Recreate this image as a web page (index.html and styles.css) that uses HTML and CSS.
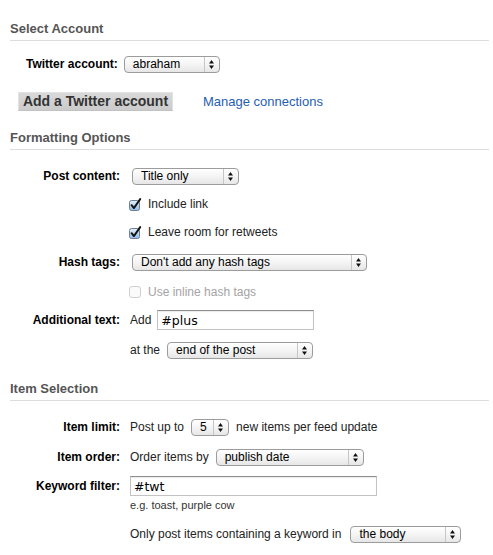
FILE: index.html
```html
<!DOCTYPE html>
<html lang="en">
<head>
<meta charset="utf-8">
<title>Twitter feed settings</title>
<link rel="stylesheet" href="styles.css">
</head>
<body>
<form class="settings">
  <section class="group">
    <h3 class="group-title">Select Account</h3>
    <div class="account-row">
      <label class="account-label" for="account">Twitter account:</label>
      <select id="account" class="sel w-account"><option>abraham</option></select>
    </div>
    <div class="account-actions">
      <button type="button" class="btn">Add a Twitter account</button>
      <a href="#" class="link">Manage connections</a>
    </div>
  </section>

  <section class="group">
    <h3 class="group-title">Formatting Options</h3>
    <div class="field">
      <label class="field-label" for="post-content">Post content:</label>
      <div class="field-value"><select id="post-content" class="sel w-post"><option>Title only</option></select></div>
    </div>
    <div class="field">
      <span class="field-label"></span>
      <label class="field-value check"><input type="checkbox" class="cb" checked>Include link</label>
    </div>
    <div class="field">
      <span class="field-label"></span>
      <label class="field-value check"><input type="checkbox" class="cb" checked>Leave room for retweets</label>
    </div>
    <div class="field field-sp">
      <label class="field-label" for="hash-tags">Hash tags:</label>
      <div class="field-value"><select id="hash-tags" class="sel w-hash"><option>Don't add any hash tags</option></select></div>
    </div>
    <div class="field field-sp">
      <span class="field-label"></span>
      <label class="field-value check is-disabled"><input type="checkbox" class="cb" disabled>Use inline hash tags</label>
    </div>
    <div class="field">
      <label class="field-label" for="extra-text">Additional text:</label>
      <div class="field-value">Add <input id="extra-text" type="text" class="txt w-plus" value="#plus"></div>
    </div>
    <div class="field field-sp">
      <span class="field-label"></span>
      <div class="field-value">at the <select class="sel w-where"><option>end of the post</option></select></div>
    </div>
  </section>

  <section class="group group-last">
    <h3 class="group-title">Item Selection</h3>
    <div class="field">
      <label class="field-label" for="item-limit">Item limit:</label>
      <div class="field-value">Post up to <select id="item-limit" class="sel w-limit"><option>5</option></select> new items per feed update</div>
    </div>
    <div class="field field-sp">
      <label class="field-label" for="item-order">Item order:</label>
      <div class="field-value">Order items by <select id="item-order" class="sel w-order"><option>publish date</option></select></div>
    </div>
    <div class="field field-stack">
      <label class="field-label" for="keywords">Keyword filter:</label>
      <div class="field-value stack">
        <input id="keywords" type="text" class="txt w-keywords" value="#twt">
        <span class="hint">e.g. toast, purple cow</span>
      </div>
    </div>
    <div class="field field-last">
      <span class="field-label"></span>
      <div class="field-value">Only post items containing a keyword in <select class="sel w-in"><option>the body</option></select></div>
    </div>
  </section>
</form>
</body>
</html>
```

FILE: styles.css
```css
* { box-sizing: border-box; }

html, body {
  margin: 0;
  background: #fff;
}

body {
  font: 12px/15px "Liberation Sans", Arial, sans-serif;
  color: #222;
}

.settings {
  padding: 21px 4px 0 10px;
}

/* section headings with a rule underneath */
.group + .group { margin-top: 19px; }
.group-last { margin-top: 21px !important; }

.group-title {
  margin: 0;
  font-size: 13px;
  line-height: 16px;
  font-weight: bold;
  color: #555;
  padding-bottom: 3px;
  border-bottom: 1px solid #ddd;
}

/* account block */
.account-row {
  display: flex;
  align-items: center;
  height: 20px;
  margin-top: 13px;
  padding-left: 16px;
}

.account-label {
  font-weight: bold;
  color: #000;
  margin-right: 4px;
}

.account-actions {
  display: flex;
  align-items: center;
  margin-top: 18px;
  padding-left: 8px;
}

.btn {
  height: 19px;
  width: 155px;
  padding: 0;
  font: bold 14px/17px "Liberation Sans", Arial, sans-serif;
  color: #333;
  background: linear-gradient(#d9d9d9, #cbcbcb);
  border: 1px solid #e2e2e2;
  border-bottom-color: #c2c2c2;
  border-radius: 0;
}

.link {
  margin-left: 30px;
  font-size: 13px;
  color: #1f5eb3;
  text-decoration: none;
}

/* label / control rows */
.field {
  display: flex;
  align-items: center;
  min-height: 20px;
  margin-top: 8px;
}

.group-title + .field { margin-top: 16px; }
.field-sp { margin-top: 10px; }
.field-stack { align-items: flex-start; margin-top: 9px; }
.field-last { margin-top: 12px; }

.field-label {
  flex: none;
  width: 110px;
  text-align: right;
  font-weight: bold;
  color: #000;
}

.field-stack .field-label { line-height: 20px; }

.field-value {
  display: flex;
  align-items: center;
  gap: 5px;
  margin-left: 10px;
  white-space: nowrap;
}

.field-last .field-value { gap: 7px; }

.stack {
  flex-direction: column;
  align-items: flex-start;
  gap: 0;
}

.hint {
  margin-top: 2px;
  font-size: 11px;
  line-height: 14px;
  color: #333;
}

/* aqua-style popup menus */
.sel {
  -webkit-appearance: none;
  appearance: none;
  height: 17px;
  margin: 0 2px;
  padding: 0 16px 0 8px;
  font: 12px "Liberation Sans", Arial, sans-serif;
  color: #000;
  border: 1px solid #9c9c9c;
  border-radius: 4px;
  background:
    url("data:image/svg+xml,%3Csvg xmlns='http://www.w3.org/2000/svg' width='15' height='15'%3E%3Cpath d='M0.5 0v15' stroke='%23c6c6c6'/%3E%3Cpath d='M5 6.5h5l-2.5-3.5z M5 8.5h5l-2.5 3.5z' fill='%23111'/%3E%3C/svg%3E") right center / 15px 15px no-repeat,
    linear-gradient(#ffffff, #f3f3f3 55%, #e6e6e6);
}

.w-account { width: 96px; margin-left: 2px; }
.w-post { width: 107px; }
.w-hash { width: 235px; }
.w-where { width: 146px; }
.w-limit { width: 38px; }
.w-order { width: 148px; }
.w-in { width: 111px; }

/* text fields */
.txt {
  height: 20px;
  margin: 0 0 0 1px;
  padding: 0 3px;
  font: 12.5px "DejaVu Sans", Verdana, sans-serif;
  color: #000;
  background: #fff;
  border: 1px solid #c3c3c3;
  border-top-color: #8d8d8d;
  border-radius: 0;
  box-shadow: inset 0 1px 1px rgba(0, 0, 0, 0.08);
}

.w-plus { width: 157px; }
.w-keywords { width: 247px; margin-left: 0; }

/* checkboxes */
.check { gap: 6px; }

.cb {
  -webkit-appearance: none;
  appearance: none;
  flex: none;
  width: 13px;
  height: 13px;
  margin: 0 0 0 -1px;
  background: url("data:image/svg+xml,%3Csvg xmlns='http://www.w3.org/2000/svg' width='13' height='13'%3E%3Crect x='0.5' y='1.5' width='11' height='11' rx='2' fill='%23f7f7f7' stroke='%23b0b0b0'/%3E%3C/svg%3E") center / 13px 13px no-repeat;
}

.cb:checked {
  background-image: url("data:image/svg+xml,%3Csvg xmlns='http://www.w3.org/2000/svg' width='13' height='13'%3E%3Cdefs%3E%3ClinearGradient id='g' x1='0' y1='0' x2='0' y2='1'%3E%3Cstop offset='0' stop-color='%23e6f1fc'/%3E%3Cstop offset='1' stop-color='%238fbbe8'/%3E%3C/linearGradient%3E%3C/defs%3E%3Crect x='0.5' y='2.5' width='10' height='10' rx='2' fill='url(%23g)' stroke='%236f7f92'/%3E%3Cpath d='M2.6 7.2l2.3 2.9 6.3-9' fill='none' stroke='%23111' stroke-width='1.9' stroke-linecap='round' stroke-linejoin='round'/%3E%3C/svg%3E");
}

.is-disabled { color: #a3a3a3; }
.cb:disabled {
  background-image: url("data:image/svg+xml,%3Csvg xmlns='http://www.w3.org/2000/svg' width='13' height='13'%3E%3Crect x='0.5' y='0.5' width='11' height='11' rx='2.5' fill='%23fafafa' stroke='%23cfcfcf'/%3E%3C/svg%3E");
}
```
